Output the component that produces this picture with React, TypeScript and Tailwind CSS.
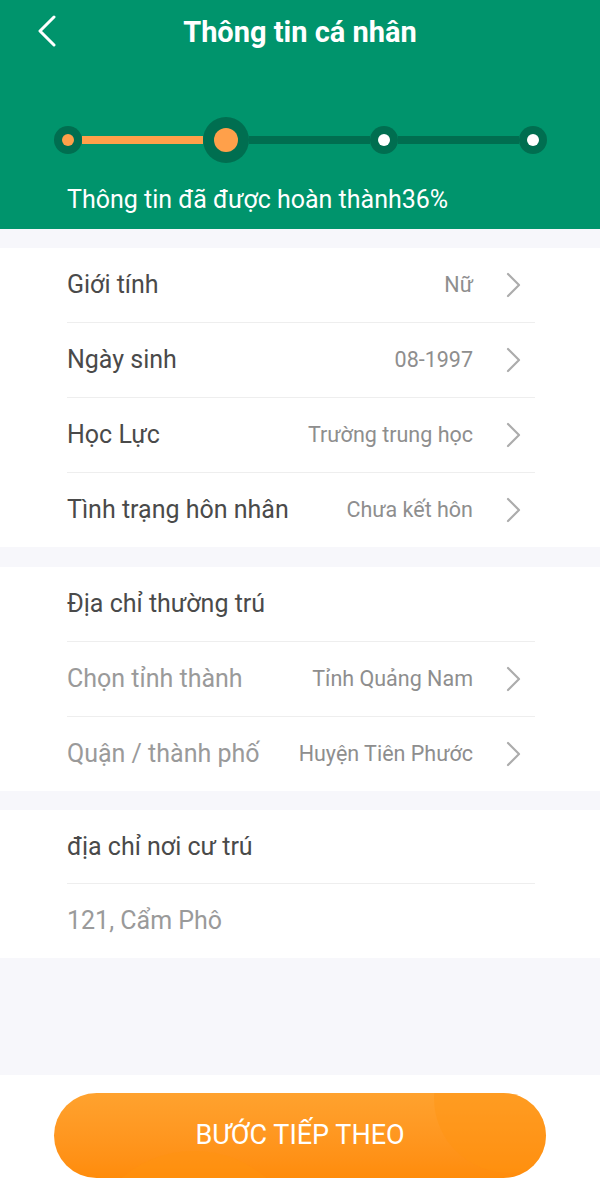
const font = { fontFamily: "Roboto, 'Noto Sans', sans-serif" };

function Chevron() {
  return (
    <svg width="16" height="26" viewBox="0 0 16 26" className="shrink-0">
      <path d="M2 2 L13 13 L2 24" fill="none" stroke="#acacac" strokeWidth="2.2" strokeLinecap="round" strokeLinejoin="round" />
    </svg>
  );
}

function Row({
  label,
  value,
  muted = false,
  arrow = true,
  last = false,
  h = "h-[75px]",
}: {
  label: string;
  value?: string;
  muted?: boolean;
  arrow?: boolean;
  last?: boolean;
  h?: string;
}) {
  return (
    <div className={`${h} ml-[67px] mr-[65px] flex items-center ${last ? "" : "border-b border-[#eeeeee]"}`}>
      <span className={`text-[25px] ${muted ? "text-[#9a9a9a]" : "text-[#4a4a4a]"}`}>{label}</span>
      <div className="flex-1" />
      {value && <span className="text-[21.5px] text-[#8e8e8e] mr-[33px]">{value}</span>}
      {arrow && (
        <div className="mr-[13px]">
          <Chevron />
        </div>
      )}
    </div>
  );
}

function Dot({ big = false, active = false }: { big?: boolean; active?: boolean }) {
  if (big) {
    return (
      <div className="w-[46px] h-[46px] rounded-full bg-[#006e50] flex items-center justify-center shrink-0">
        <div className="w-[24px] h-[24px] rounded-full bg-[#ffa04a]" />
      </div>
    );
  }
  return (
    <div className="w-[28px] h-[28px] rounded-full bg-[#006e50] flex items-center justify-center shrink-0">
      <div className={`w-[12px] h-[12px] rounded-full ${active ? "bg-[#ffa04a]" : "bg-white"}`} />
    </div>
  );
}

export default function App() {
  return (
    <div className="w-[600px] min-h-[1189px] flex flex-col bg-[#f7f7fb]" style={font}>
      <div className="h-[229px] bg-[#00946c] flex flex-col">
        <div className="h-[66px] relative flex items-center justify-center">
          <svg width="20" height="32" viewBox="0 0 20 32" className="absolute left-[37px] top-[15px]">
            <path d="M17 2 L3 16 L17 30" fill="none" stroke="white" strokeWidth="3" strokeLinecap="round" strokeLinejoin="round" />
          </svg>
          <h1 className="text-white text-[29px] font-bold">Thông tin cá nhân</h1>
        </div>
        <div className="mt-[51px] ml-[54px] mr-[53px] flex items-center">
          <Dot active />
          <div className="flex-1 h-[8px] bg-[#ffa04a]" />
          <Dot big />
          <div className="flex-1 h-[8px] bg-[#006e50]" />
          <Dot />
          <div className="flex-1 h-[8px] bg-[#006e50]" />
          <Dot />
        </div>
        <div className="mt-[22px] ml-[67px] text-white text-[25px] leading-[30px]">Thông tin đã được hoàn thành36%</div>
      </div>

      <div className="flex-1 pt-[19px] flex flex-col">
        <div className="bg-white">
          <Row label="Giới tính" value="Nữ" />
          <Row label="Ngày sinh" value="08-1997" />
          <Row label="Học Lực" value="Trường trung học" />
          <Row label="Tình trạng hôn nhân" value="Chưa kết hôn" last h="h-[74px]" />
        </div>
        <div className="bg-white mt-[20px]">
          <Row label="Địa chỉ thường trú" arrow={false} />
          <Row label="Chọn tỉnh thành" value="Tỉnh Quảng Nam" muted />
          <Row label="Quận / thành phố" value="Huyện Tiên Phước" muted last h="h-[74px]" />
        </div>
        <div className="bg-white mt-[19px]">
          <Row label="địa chỉ nơi cư trú" arrow={false} h="h-[74px]" />
          <Row label="121, Cẩm Phô" arrow={false} muted last h="h-[74px]" />
        </div>
      </div>

      <div className="h-[114px] bg-white pt-[18px] flex justify-center">
        <button className="relative overflow-hidden w-[492px] h-[85px] rounded-full bg-gradient-to-b from-[#ffa22e] to-[#ff8c0a] flex items-center justify-center">
          <div className="absolute w-[220px] h-[220px] rounded-full bg-[#ff9410]/40 left-[30px] top-[58px]" />
          <div className="absolute w-[150px] h-[150px] rounded-full bg-[#ff9410]/40 left-[380px] top-[-70px]" />
          <span className="relative text-white text-[27px]">BƯỚC TIẾP THEO</span>
        </button>
      </div>
    </div>
  );
}
